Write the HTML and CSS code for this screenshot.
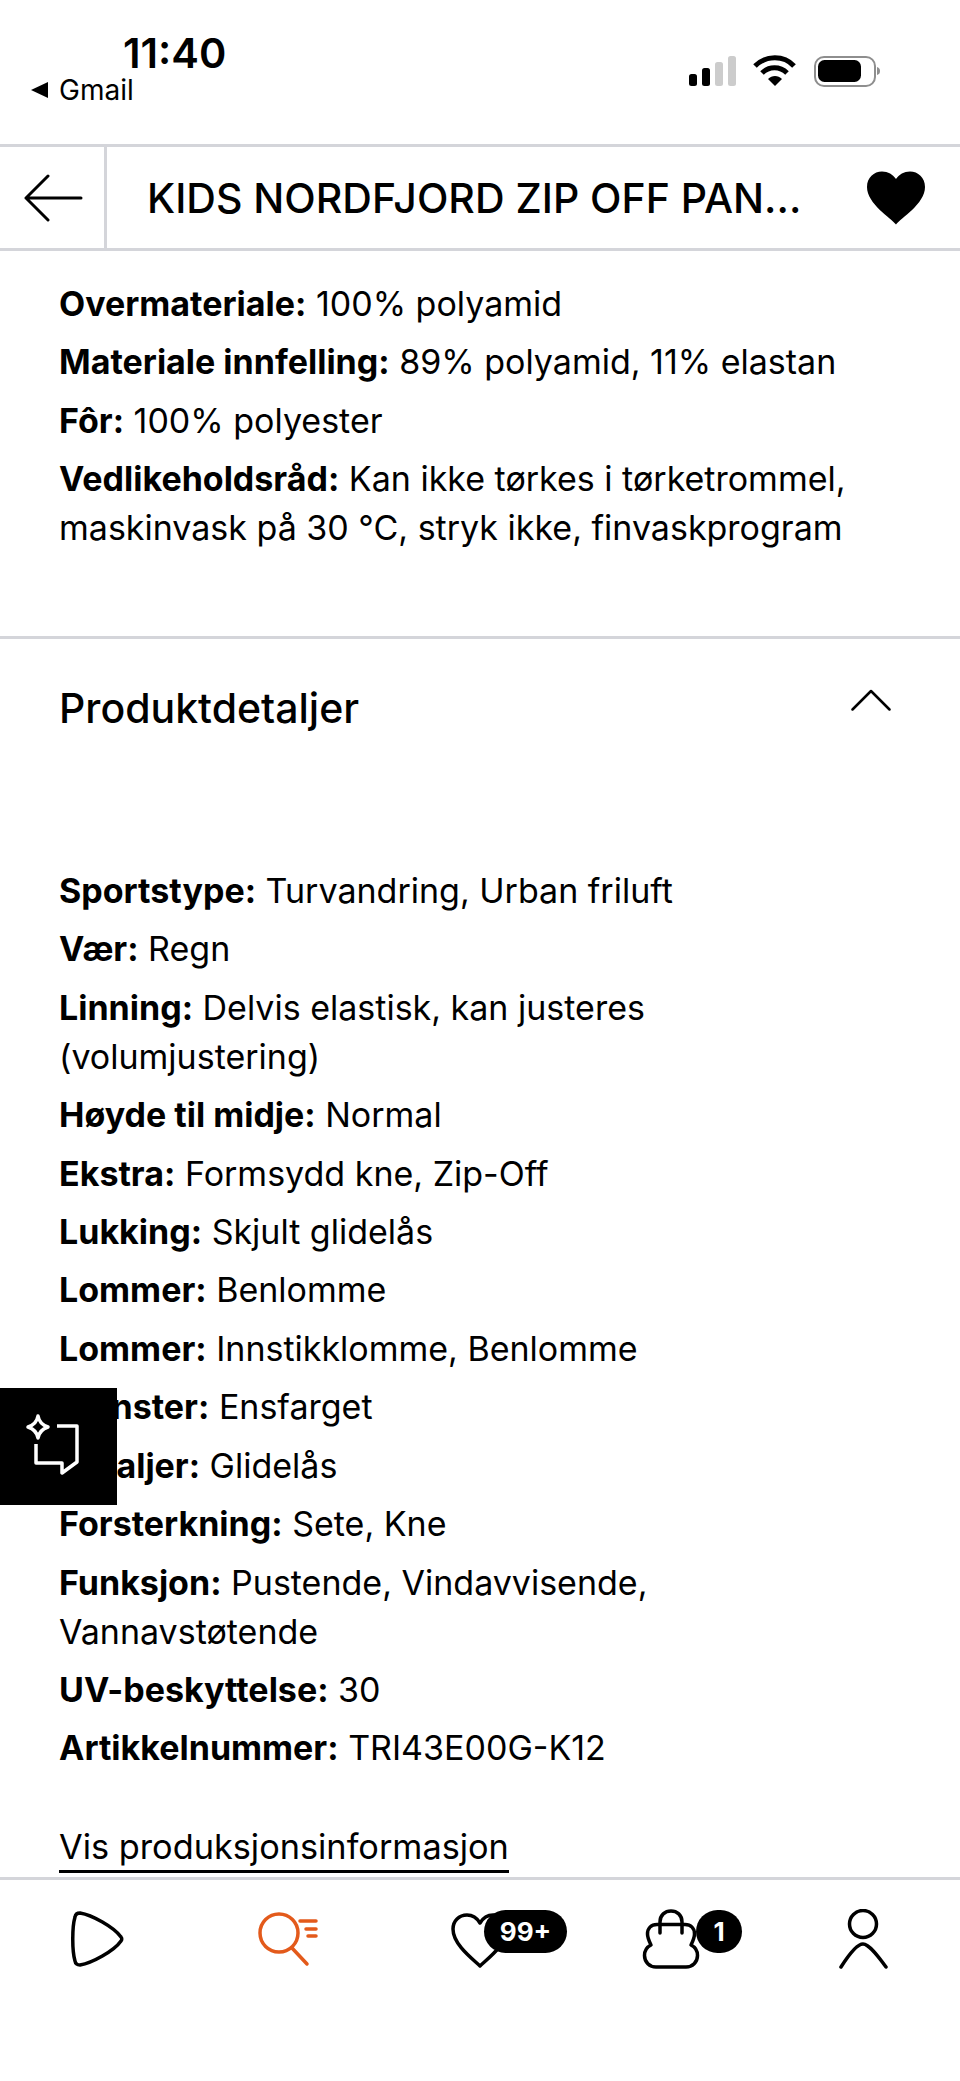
FILE: index.html
```html
<!DOCTYPE html>
<html lang="no">
<head>
<meta charset="utf-8">
<title>KIDS NORDFJORD ZIP OFF PANTS</title>
<link rel="stylesheet" href="styles.css">
</head>
<body>
<div class="page">
  <div class="status">
    <div class="status-left">
      <div class="time">11:40</div>
      <div class="back-app"><svg class="back-tri" viewBox="0 0 18 18"><path d="M0 9 L17 1 V17 Z" fill="#000"/></svg>Gmail</div>
    </div>
    <svg class="status-icons" width="200" height="34" viewBox="0 0 200 34">
      <rect x="9" y="19" width="8" height="12" rx="2.5" fill="#000"/>
      <rect x="22" y="13" width="8" height="18" rx="2.5" fill="#000"/>
      <rect x="35" y="7" width="8" height="24" rx="2.5" fill="#ccc"/>
      <rect x="48" y="1" width="8" height="30" rx="2.5" fill="#ccc"/>
      <path d="M75 11 C86 0 104 0 114 11" fill="none" stroke="#000" stroke-width="5"/>
      <path d="M82 18 C89 11 100 11 107 18" fill="none" stroke="#000" stroke-width="5"/>
      <path d="M88 24 C92 20 98 20 102 24 L95 31 Z" fill="#000"/>
      <rect x="135" y="2" width="60" height="29" rx="9" fill="none" stroke="#8e8e8e" stroke-width="2"/>
      <rect x="138" y="5" width="43" height="22" rx="6.5" fill="#000"/>
      <path d="M197 12 C199.500 13 200 14 200 16 C200 18 199.500 19 197 20 Z" fill="#8e8e8e"/>
    </svg>
  </div>

  <header class="topbar">
    <div class="back-cell">
      <svg width="60" height="50" viewBox="0 0 60 50"><path d="M24 3 L2 25 L24 47 M2 25 H57" fill="none" stroke="#000" stroke-width="3" stroke-linecap="round" stroke-linejoin="round"/></svg>
    </div>
    <h1 class="title">KIDS NORDFJORD ZIP OFF PAN...</h1>
    <svg class="fav" width="60" height="54" viewBox="0 0 60 54"><path d="M30 53.500 C25 47 1 33 1 16 C1 6.500 8 0.500 16 0.500 C22 0.500 27 3.500 30 8 C33 3.500 38 0.500 44 0.500 C52 0.500 59 6.500 59 16 C59 33 35 47 30 53.500 Z" fill="#000"/></svg>
  </header>

  <main>
    <section class="specs first">
      <p><b>Overmateriale:</b> 100% polyamid</p>
      <p><b>Materiale innfelling:</b> 89% polyamid, 11% elastan</p>
      <p><b>Fôr:</b> 100% polyester</p>
      <p><b>Vedlikeholdsråd:</b> Kan ikke tørkes i tørketrommel, maskinvask på 30 °C, stryk ikke, finvaskprogram</p>
    </section>
    <section class="details">
      <div class="acc-head">
        <h2>Produktdetaljer</h2>
        <svg width="40" height="22" viewBox="0 0 40 22"><path d="M1.500 20.500 L20 2 L38.500 20.500" fill="none" stroke="#000" stroke-width="2.500" stroke-linecap="round" stroke-linejoin="round"/></svg>
      </div>
      <div class="specs">
        <p><b>Sportstype:</b> Turvandring, Urban friluft</p>
        <p><b>Vær:</b> Regn</p>
        <p><b>Linning:</b> Delvis elastisk, kan justeres (volumjustering)</p>
        <p><b>Høyde til midje:</b> Normal</p>
        <p><b>Ekstra:</b> Formsydd kne, Zip-Off</p>
        <p><b>Lukking:</b> Skjult glidelås</p>
        <p><b>Lommer:</b> Benlomme</p>
        <p><b>Lommer:</b> Innstikklomme, Benlomme</p>
        <p><b>Mønster:</b> Ensfarget</p>
        <p><b>Detaljer:</b> Glidelås</p>
        <p><b>Forsterkning:</b> Sete, Kne</p>
        <p><b>Funksjon:</b> Pustende, Vindavvisende, Vannavstøtende</p>
        <p><b>UV-beskyttelse:</b> 30</p>
        <p><b>Artikkelnummer:</b> TRI43E00G-K12</p>
      </div>
      <a class="prodlink" href="#">Vis produksjonsinformasjon</a>
    </section>
  </main>

  <div class="assistant">
    <svg width="60" height="64" viewBox="0 0 60 64">
      <path d="M13 3 C14 9 17 12 23 14 C17 16 14 19 13 25 C12 19 9 16 3 14 C9 12 12 9 13 3 Z" fill="none" stroke="#fff" stroke-width="3.500" stroke-linejoin="round"/>
      <path d="M32 13 H52 V49 L37 60 V50 H11 V31" fill="none" stroke="#fff" stroke-width="3.500" stroke-linejoin="round"/>
    </svg>
  </div>

  <nav class="tabs">
    <div class="tab">
      <svg width="60" height="60" viewBox="0 0 60 60"><path d="M14 4 C26 6 48 18 55 28 C56 29 56 31 55 32 C48 42 26 54 14 56 C11 56 9.500 55 9 52 C6 42 6 18 9 8 C9.500 5 11 4 14 4 Z" fill="none" stroke="#000" stroke-width="3.500" stroke-linejoin="round"/></svg>
    </div>
    <div class="tab">
      <svg width="60" height="60" viewBox="0 0 60 60"><circle cx="21" cy="24" r="19" fill="none" stroke="#e35a1b" stroke-width="3.500"/><path d="M34 39 L49 55" stroke="#e35a1b" stroke-width="3.500" stroke-linecap="round"/><path d="M42 12 H58 M48 20 H58 M50 27 H58" stroke="#e35a1b" stroke-width="3.500" stroke-linecap="round"/></svg>
    </div>
    <div class="tab">
      <svg width="60" height="60" viewBox="0 0 60 60"><path d="M30 57 C24 51 3 36 3 20 C3 12 9 6 17 6 C23 6 27 9 30 14 C33 9 37 6 43 6 C51 6 57 12 57 20 C57 36 36 51 30 57 Z" fill="none" stroke="#000" stroke-width="3.500" stroke-linejoin="round"/></svg>
      <span class="badge badge-wide">99+</span>
    </div>
    <div class="tab">
      <svg width="60" height="60" viewBox="0 0 60 60"><path d="M18 24 V13 C18 6 23 2 29 2 C35 2 40 6 40 13 V24" fill="none" stroke="#000" stroke-width="3.500" stroke-linecap="round"/><path d="M15 15.500 H43 C49 15.500 52.500 19.500 52.500 25 C52.500 29 50.500 33 49 36 C53 38 55.500 42 55.500 46.500 C55.500 53 50.500 58 44 58 H14 C7.500 58 2.500 53 2.500 46.500 C2.500 42 5 38 9 36 C7.500 33 5.500 29 5.500 25 C5.500 19.500 9 15.500 15 15.500 Z" fill="none" stroke="#000" stroke-width="3.500" stroke-linejoin="round"/></svg>
      <span class="badge badge-round">1</span>
    </div>
    <div class="tab">
      <svg width="60" height="60" viewBox="0 0 60 60"><circle cx="29" cy="15" r="13.500" fill="none" stroke="#000" stroke-width="3.500"/><path d="M7 58 C14 47 23 35 29 35 C35 35 44 47 52 58" fill="none" stroke="#000" stroke-width="3.500" stroke-linecap="round"/></svg>
    </div>
  </nav>
</div>
</body>
</html>
```

FILE: styles.css
```css
* { box-sizing: border-box; }
html, body { margin: 0; padding: 0; background: #fff; }
body { font-family: Inter, "Liberation Sans", sans-serif; color: #000; }
.page { position: relative; width: 960px; height: 2081px; overflow: hidden; display: flex; flex-direction: column; }

.status { height: 144px; flex: none; display: flex; justify-content: space-between; padding: 0 80px 0 31px; }
.status-left { display: flex; flex-direction: column; padding-top: 29px; }
.time { font-size: 41.500px; font-weight: 600; line-height: 48px; margin-left: 92px; }
.back-app { display: flex; align-items: center; font-size: 28px; font-weight: 400; line-height: 30px; margin-top: -2px; }
.back-tri { width: 18px; height: 18px; margin-right: 10px; }
.status-icons { margin-top: 55px; }

.topbar { height: 107px; flex: none; display: flex; align-items: center; border-top: 3px solid #d4d5da; border-bottom: 3px solid #d4d5da; }
.back-cell { width: 107px; height: 100%; flex: none; display: flex; align-items: center; justify-content: flex-start; padding-left: 24px; border-right: 3px solid #d4d5da; }
.title { flex: 1; margin: 0; padding-left: 40px; font-size: 41px; font-weight: 500; line-height: 50px; white-space: nowrap; }
.fav { margin-right: 34px; flex: none; }

.specs p { margin: 0 0 9.450px; font-size: 34px; line-height: 49px; }
.specs b { font-weight: 700; }
.first { padding: 28px 59px 74px; border-bottom: 3px solid #d4d5da; }
.details { padding: 0 59px; }
.acc-head { display: flex; justify-content: space-between; align-items: flex-start; height: 227px; padding: 44px 10px 0 0; }
.acc-head h2 { margin: 0; font-size: 41px; font-weight: 500; line-height: 50px; }
.acc-head svg { margin-top: 6px; }
.prodlink { display: inline-block; margin-top: 41px; font-size: 34.300px; line-height: 47px; color: #000; text-decoration: none; border-bottom: 3px solid #000; }

.assistant { position: absolute; left: 0; top: 1388px; width: 117px; height: 117px; background: #000; padding: 25px 0 0 25px; }

.tabs { position: absolute; left: 0; right: 0; top: 1877px; height: 204px; display: grid; grid-template-columns: repeat(5, 192px); border-top: 3px solid #d4d5da; background: #fff; padding-top: 29px; }
.tab { position: relative; display: flex; justify-content: center; align-items: flex-start; }
.badge { position: absolute; top: 1px; height: 43px; background: #000; color: #fff; border-radius: 22px; font-size: 26px; font-weight: 700; line-height: 43px; text-align: center; }
.badge-wide { left: 100px; width: 83px; }
.badge-round { left: 120px; width: 46px; }
```
